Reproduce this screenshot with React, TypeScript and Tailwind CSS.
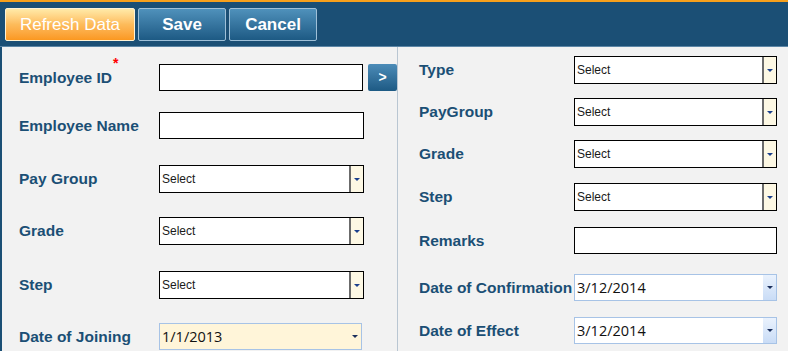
import { ReactNode } from 'react'

const font = { fontFamily: '"Liberation Sans", Arial, sans-serif' }

function Label({ children }: { children: ReactNode }) {
  return <div className="text-[15.5px] font-bold text-[#1b4f75] whitespace-nowrap">{children}</div>
}

function DropSelect({ w = 'w-[205px]' }: { w?: string }) {
  return (
    <div className={`${w} h-[28px] flex border border-black bg-white`}>
      <div className="flex-1 flex items-center pl-[2px] text-[12px] text-[#1a1a1a]">Select</div>
      <div className="w-[14px] border-l-2 border-l-[#6b6b6b] bg-[#fdf8e4] flex items-center justify-center">
        <span className="block w-0 h-0 border-l-[3px] border-r-[3px] border-t-[3px] border-l-transparent border-r-transparent border-t-[#1b3f8c]" />
      </div>
    </div>
  )
}

function DateBox({ value, cream }: { value: string; cream?: boolean }) {
  return (
    <div className={`w-[203px] h-[27px] flex border border-[#a7c3e6] ${cream ? 'bg-[#fff5d9]' : 'bg-white'}`}>
      <div className="flex-1 flex items-center pl-[2px] text-[14.5px] text-[#111]" style={{ fontFamily: '"Open Sans", sans-serif' }}>
        {value}
      </div>
      <div className={`w-[13px] flex items-center justify-center ${cream ? '' : 'bg-gradient-to-b from-[#eaf2fd] to-[#c9dcf6]'}`}>
        <span className="block w-0 h-0 border-l-[3px] border-r-[3px] border-t-[3px] border-l-transparent border-r-transparent border-t-[#1b2f5c]" />
      </div>
    </div>
  )
}

function TextBox() {
  return <div className="w-[205px] h-[27px] border border-black bg-white" />
}

export default function App() {
  return (
    <div className="w-[788px] h-[351px] overflow-hidden bg-[#f2f2f2]" style={font}>
      <div className="h-[2px] bg-[#f7a01c]" />
      <div className="h-[45px] bg-[#1b4f75] border-b border-b-[#5c86a6] flex items-start gap-[3px] pl-[5px] pt-[6px]">
        <button className="w-[130px] h-[33px] rounded-[2px] border border-[#fff3d6] bg-gradient-to-b from-[#ffeaa8] via-[#fdbb5a] to-[#fb981f] text-white text-[17px]">
          Refresh Data
        </button>
        <button className="w-[88px] h-[33px] rounded-[2px] border border-[#9fc0d8] bg-gradient-to-b from-[#4f91bb] to-[#1d5a84] text-white text-[17px] font-bold">
          Save
        </button>
        <button className="w-[88px] h-[33px] rounded-[2px] border border-[#9fc0d8] bg-gradient-to-b from-[#4f91bb] to-[#1d5a84] text-white text-[17px] font-bold">
          Cancel
        </button>
      </div>
      <div className="flex h-[304px]">
        <div className="w-[398px] border-l-2 border-l-[#1b4f75] border-r border-r-[#b9c6d2] pl-[17px]">
          <div className="mt-[17px] flex items-center h-[27px]">
            <div className="w-[140px] relative">
              <div className="w-[93px] overflow-hidden">
                <Label>Employee ID</Label>
              </div>
              <span className="absolute left-[94px] top-[-13px] text-[#ff0000] text-[14px] font-bold">*</span>
            </div>
            <TextBox />
            <button className="ml-[5px] w-[29px] h-[27px] rounded-[2px] bg-gradient-to-b from-[#4c8cb8] to-[#1d5a84] text-white text-[14px] font-bold">
              &gt;
            </button>
          </div>
          <div className="mt-[21px] flex items-center h-[27px]">
            <div className="w-[140px]"><Label>Employee Name</Label></div>
            <TextBox />
          </div>
          <div className="mt-[26px] flex items-center h-[28px]">
            <div className="w-[140px]"><Label>Pay Group</Label></div>
            <DropSelect />
          </div>
          <div className="mt-[24px] flex items-center h-[28px]">
            <div className="w-[140px]"><Label>Grade</Label></div>
            <DropSelect />
          </div>
          <div className="mt-[26px] flex items-center h-[28px]">
            <div className="w-[140px]"><Label>Step</Label></div>
            <DropSelect />
          </div>
          <div className="mt-[24px] flex items-center h-[27px]">
            <div className="w-[140px]"><Label>Date of Joining</Label></div>
            <DateBox value="1/1/2013" cream />
          </div>
        </div>
        <div className="flex-1 pl-[21px]">
          <div className="mt-[9px] flex items-center h-[28px]">
            <div className="w-[155px]"><Label>Type</Label></div>
            <DropSelect w="w-[203px]" />
          </div>
          <div className="mt-[14px] flex items-center h-[28px]">
            <div className="w-[155px]"><Label>PayGroup</Label></div>
            <DropSelect w="w-[203px]" />
          </div>
          <div className="mt-[14px] flex items-center h-[28px]">
            <div className="w-[155px]"><Label>Grade</Label></div>
            <DropSelect w="w-[203px]" />
          </div>
          <div className="mt-[15px] flex items-center h-[28px]">
            <div className="w-[155px]"><Label>Step</Label></div>
            <DropSelect w="w-[203px]" />
          </div>
          <div className="mt-[16px] flex items-center h-[27px]">
            <div className="w-[155px]"><Label>Remarks</Label></div>
            <div className="w-[203px] h-[27px] border border-black bg-white" />
          </div>
          <div className="mt-[20px] flex items-center h-[27px]">
            <div className="w-[155px]"><Label>Date of Confirmation</Label></div>
            <DateBox value="3/12/2014" />
          </div>
          <div className="mt-[16px] flex items-center h-[27px]">
            <div className="w-[155px]"><Label>Date of Effect</Label></div>
            <DateBox value="3/12/2014" />
          </div>
        </div>
      </div>
    </div>
  )
}
